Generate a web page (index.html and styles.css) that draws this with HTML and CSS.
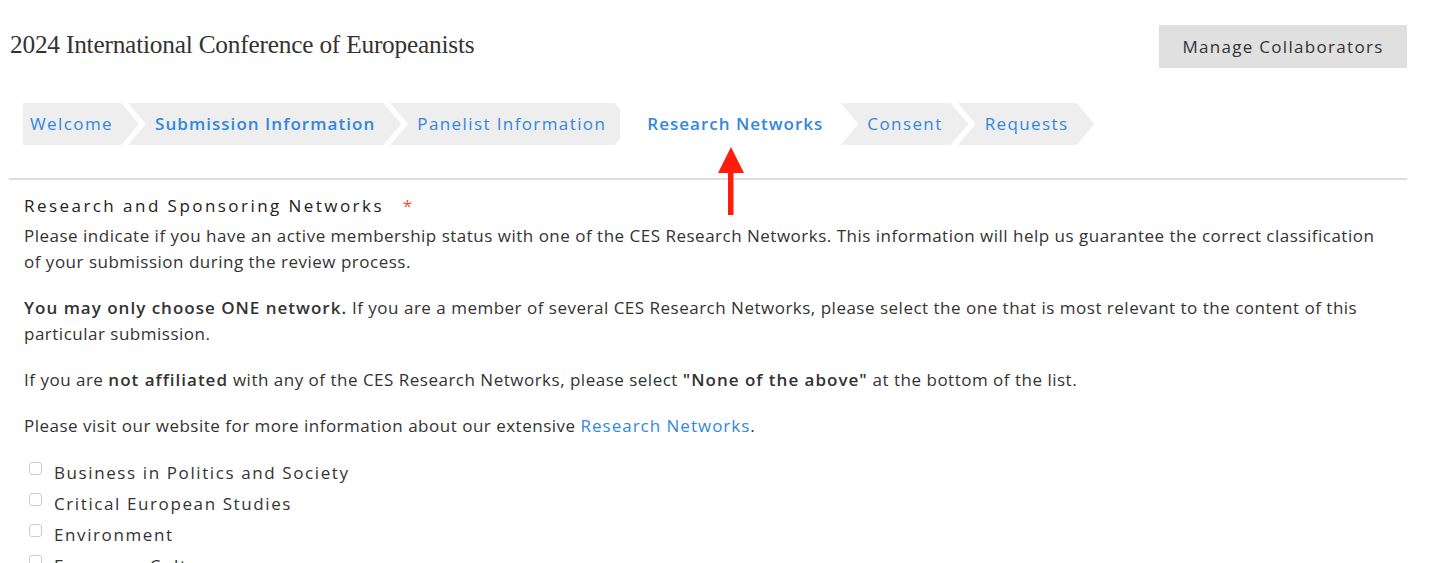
FILE: index.html
```html
<!DOCTYPE html>
<html lang="en">
<head>
<meta charset="utf-8">
<title>2024 International Conference of Europeanists</title>
<link rel="stylesheet" href="styles.css">
</head>
<body>
<div class="page">
  <header class="header">
    <h1 class="title">2024 International Conference of Europeanists</h1>
    <button class="btn" type="button">Manage Collaborators</button>
  </header>

  <nav class="steps">
    <a class="step step-first">Welcome</a>
    <a class="step step-done">Submission Information</a>
    <a class="step step-before-active">Panelist Information</a>
    <a class="step step-active">Research Networks</a>
    <a class="step">Consent</a>
    <a class="step">Requests</a>
    <svg class="pointer" width="30" height="70" viewBox="0 0 30 70" aria-hidden="true">
      <polygon points="14,0 27,26 1,26" fill="#ff1e0c"/>
      <rect x="11" y="24" width="5.5" height="44" fill="#ff1e0c"/>
    </svg>
  </nav>

  <div class="divider"></div>

  <section class="field">
    <div class="field-label">Research and Sponsoring Networks <span class="req">*</span></div>
    <p>Please indicate if you have an active membership status with one of the CES Research Networks. This information will help us guarantee the correct classification of your submission during the review process.</p>
    <p><strong>You may only choose ONE network.</strong> If you are a member of several CES Research Networks, please select the one that is most relevant to the content of this particular submission.</p>
    <p>If you are <strong>not affiliated</strong> with any of the CES Research Networks, please select <strong>"None of the above"</strong> at the bottom of the list.</p>
    <p>Please visit our website for more information about our extensive <a class="link">Research Networks</a>.</p>

    <ul class="options">
      <li><span class="box"></span><span class="opt">Business in Politics and Society</span></li>
      <li><span class="box"></span><span class="opt">Critical European Studies</span></li>
      <li><span class="box"></span><span class="opt">Environment</span></li>
      <li><span class="box"></span><span class="opt">European Culture</span></li>
    </ul>
  </section>
</div>
</body>
</html>
```

FILE: styles.css
```css
html, body {
  margin: 0;
  padding: 0;
  background: #fff;
}

body {
  font-family: "Open Sans", "Liberation Sans", sans-serif;
  color: #333;
}

.page {
  padding: 0 23px 0 9px;
}

.header {
  display: flex;
  justify-content: space-between;
  align-items: center;
  padding-top: 25px;
  height: 43px;
}

.title {
  margin: 0 0 4px;
  padding-left: 1px;
  font-family: "Liberation Serif", serif;
  font-weight: 400;
  font-size: 25.3px;
  color: #333;
  letter-spacing: -0.2px;
}

.btn {
  height: 43px;
  width: 248px;
  border: 0;
  background: #e0e0e0;
  font-family: "Open Sans", sans-serif;
  font-size: 17px;
  letter-spacing: 1.3px;
  color: #333;
  padding: 0;
}

.steps {
  position: relative;
  display: flex;
  margin-top: 35px;
  padding-left: 14px;
  height: 42px;
}

.step {
  box-sizing: border-box;
  display: flex;
  align-items: center;
  height: 42px;
  padding: 0 26px 2px 27px;
  margin-left: -11px;
  background: #eee;
  color: #3287e0;
  font-size: 17px;
  letter-spacing: 1.4px;
  white-space: nowrap;
  clip-path: polygon(0 0, calc(100% - 18px) 0, 100% 50%, calc(100% - 18px) 100%, 0 100%, 18px 50%);
}

.step-first {
  margin-left: 0;
  padding-left: 7px;
  clip-path: polygon(0 0, calc(100% - 18px) 0, 100% 50%, calc(100% - 18px) 100%, 0 100%);
}

.step-done {
  font-weight: 600;
  letter-spacing: 1.05px;
}

.step-before-active {
  padding-right: 14px;
  clip-path: polygon(0 0, calc(100% - 6px) 0, 100% 6px, 100% calc(100% - 6px), calc(100% - 6px) 100%, 0 100%, 18px 50%);
}

.step-active {
  background: transparent;
  margin-left: 0;
  padding-left: 27px;
  padding-right: 28px;
  font-weight: 600;
  letter-spacing: 1px;
  clip-path: none;
}

.pointer {
  position: absolute;
  left: 708px;
  top: 44px;
}

.divider {
  margin-top: 33px;
  border-top: 2px solid #ddd;
}

.field {
  padding-left: 15px;
  padding-right: 20px;
}

.field-label {
  margin-top: 15px;
  font-size: 17px;
  font-weight: 500;
  letter-spacing: 2.45px;
  color: #222;
  line-height: 22px;
}

.req {
  color: #f0553a;
  margin-left: 12px;
}

.field p {
  margin: 6px 0 20px;
  font-size: 17px;
  letter-spacing: 0.5px;
  line-height: 26px;
}

.field p + p {
  margin-top: 0;
}

.field strong {
  font-weight: 600;
  letter-spacing: 1px;
}

.link {
  color: #3287e0;
  letter-spacing: 1px;
}

.options {
  list-style: none;
  margin: 0;
  padding: 4px 0 0;
}

.options li {
  display: flex;
  align-items: flex-start;
  height: 31px;
}

.box {
  box-sizing: border-box;
  width: 13px;
  height: 13px;
  margin: -1px 12px 0 5px;
  border: 1px solid #ccc;
  border-radius: 3px;
}

.opt {
  font-size: 17px;
  letter-spacing: 1.6px;
  line-height: 20px;
}
```
